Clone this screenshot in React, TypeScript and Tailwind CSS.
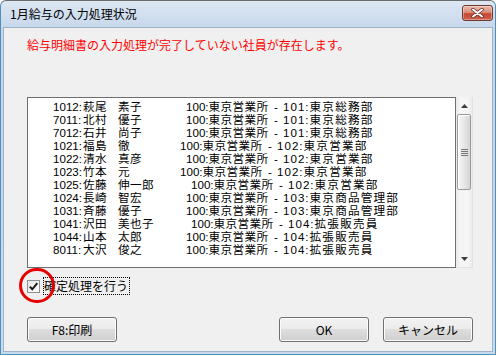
import React from 'react';

const rows = [
  { code: '1012', sei: '萩尾', mei: '素子', w: 'w-[68px]', dc: '101:', dept: '東京総務部' },
  { code: '7011', sei: '北村', mei: '優子', w: 'w-[68px]', dc: '101:', dept: '東京総務部' },
  { code: '7012', sei: '石井', mei: '尚子', w: 'w-[68px]', dc: '101:', dept: '東京総務部' },
  { code: '1021', sei: '福島', mei: '徹', w: 'w-[62px]', dc: '102:', dept: '東京営業部' },
  { code: '1022', sei: '清水', mei: '真彦', w: 'w-[68px]', dc: '102:', dept: '東京営業部' },
  { code: '1023', sei: '竹本', mei: '元', w: 'w-[62px]', dc: '102:', dept: '東京営業部' },
  { code: '1025', sei: '佐藤', mei: '伸一郎', w: 'w-[73px]', dc: '102:', dept: '東京営業部' },
  { code: '1024', sei: '長崎', mei: '智宏', w: 'w-[68px]', dc: '103:', dept: '東京商品管理部' },
  { code: '1031', sei: '斉藤', mei: '優子', w: 'w-[68px]', dc: '103:', dept: '東京商品管理部' },
  { code: '1041', sei: '沢田', mei: '美也子', w: 'w-[73px]', dc: '104:', dept: '拡張販売員' },
  { code: '1044', sei: '山本', mei: '太郎', w: 'w-[68px]', dc: '104:', dept: '拡張販売員' },
  { code: '8011', sei: '大沢', mei: '俊之', w: 'w-[68px]', dc: '104:', dept: '拡張販売員' },
];

const btn =
  'h-[25px] w-[90px] rounded-[3px] border border-[#707070] bg-[linear-gradient(to_bottom,#f2f2f2_0%,#ebebeb_50%,#dddddd_50%,#cfcfcf_100%)] shadow-[inset_0_0_0_1px_#fbfbfb] text-[12px] text-black flex items-center justify-center';

function Arrow({ down }: { down?: boolean }) {
  return (
    <div className="h-[17px] flex items-center justify-center">
      <svg width="7" height="4" viewBox="0 0 7 4">
        <polygon points={down ? '0,0 7,0 3.5,4' : '3.5,0 7,4 0,4'} fill="#3d3d3d" />
      </svg>
    </div>
  );
}

export default function App() {
  return (
    <div className="w-[498px] h-[356px] bg-white font-['Noto_Sans_CJK_JP',sans-serif]">
      <div className="w-[496px] h-[355px] flex flex-col rounded-t-[6px] border border-[#4f8fb8] border-t-[#6b6b6b] bg-[linear-gradient(to_bottom,#dde7f3,#c4d6ea_30px,#c6dcee)]">
        {/* title bar */}
        <div className="h-[26px] flex items-start pl-[9px] pr-[2px]">
          <span className="mt-[5px] text-[12px] leading-[16px] text-black">1月給与の入力処理状況</span>
          <div className="ml-auto mt-[4px] w-[31px] h-[16px] rounded-[3px] border border-[#6d3a32] bg-[linear-gradient(to_bottom,#eab8ac_0%,#dc8f7c_45%,#c44a32_55%,#d0604a_100%)] shadow-[inset_0_0_0_1px_rgba(255,255,255,0.35)] flex items-center justify-center">
            <svg width="13" height="10" viewBox="0 0 13 10">
              <path d="M2 1.5 L11 8.5 M11 1.5 L2 8.5" stroke="#5a2a22" strokeWidth="3.4" strokeLinecap="round" />
              <path d="M2 1.5 L11 8.5 M11 1.5 L2 8.5" stroke="#ffffff" strokeWidth="2" strokeLinecap="round" />
            </svg>
          </div>
        </div>

        {/* client */}
        <div className="flex-1 mx-[2px] mb-[2px] border border-[#9fb3c8] bg-[#f0f0f0] pl-[23px] flex flex-col">
          <p className="mt-[10px] text-[12px] leading-[14px] text-[#ff0000]">
            給与明細書の入力処理が完了していない社員が存在します。
          </p>

          <div className="mt-[45px] flex w-[446px]">
            <div className="w-[429px] h-[171px] border border-[#6e6e6e] bg-white pl-[25px] pt-[2px] font-['Liberation_Sans','Noto_Sans_CJK_JP',sans-serif] text-[11.6px] leading-[13px] text-black">
              {rows.map((r) => (
                <div key={r.code} className="flex whitespace-nowrap">
                  <span className="w-[30px]">{r.code}:</span>
                  <span className="w-[35px] tracking-[0.4px]">{r.sei}</span>
                  <span className={`${r.w} tracking-[0.4px]`}>{r.mei}</span>
                  <span className="w-[85px]">100:<span className="tracking-[0.4px]">東京営業所</span></span>
                  <span className="w-[12px] pl-[3px]">-</span>
                  <span className="tracking-[1px]">{r.dc}</span>
                  <span className="tracking-[1.2px]">{r.dept}</span>
                </div>
              ))}
            </div>
            <div className="w-[17px] h-[171px] flex flex-col bg-[linear-gradient(to_right,#e9e9e9,#f5f5f5_25%,#f5f5f5_75%,#ebebeb)] border-r border-b border-[#e2e2e2]">
              <Arrow />
              <div className="mx-[1px] h-[76px] rounded-[2px] border border-[#9a9a9a] bg-[linear-gradient(to_right,#f6f6f6,#e9e9e9_45%,#d5d5d5)] shadow-[inset_1px_1px_0_#ffffff] flex flex-col items-center justify-center gap-[1px]">
                <div className="w-[7px] h-[1px] bg-[#777]" />
                <div className="w-[7px] h-[1px] bg-[#777]" />
                <div className="w-[7px] h-[1px] bg-[#777]" />
                <div className="w-[7px] h-[1px] bg-[#777]" />
              </div>
              <div className="flex-1" />
              <Arrow down />
            </div>
          </div>

          <div className="relative mt-[9px] h-[18px] flex items-center gap-[3px]">
            <div className="w-[13px] h-[13px] border border-[#8e8f8f] bg-[linear-gradient(to_bottom_right,#e4e4e4,#ffffff)] flex items-center justify-center">
              <svg width="11" height="11" viewBox="0 0 11 11">
                <path d="M1.8 5.6 L4.3 8.3 L9.3 2.2" stroke="#1a1a1a" strokeWidth="2" fill="none" />
              </svg>
            </div>
            <div className="h-[18px] w-[87px] border border-dotted border-black text-[12px] leading-[16px] text-black">
              確定処理を行う
            </div>
            <div className="absolute left-[-8px] top-[-9px] w-[36px] h-[35px] rounded-full border-[3.5px] border-[#e60000]" />
          </div>

          <div className="mt-[22px] flex w-[446px] gap-[14px]">
            <div className={btn}>F8:印刷</div>
            <div className={`${btn} ml-auto`}>OK</div>
            <div className={btn}>キャンセル</div>
          </div>
        </div>
      </div>
    </div>
  );
}
